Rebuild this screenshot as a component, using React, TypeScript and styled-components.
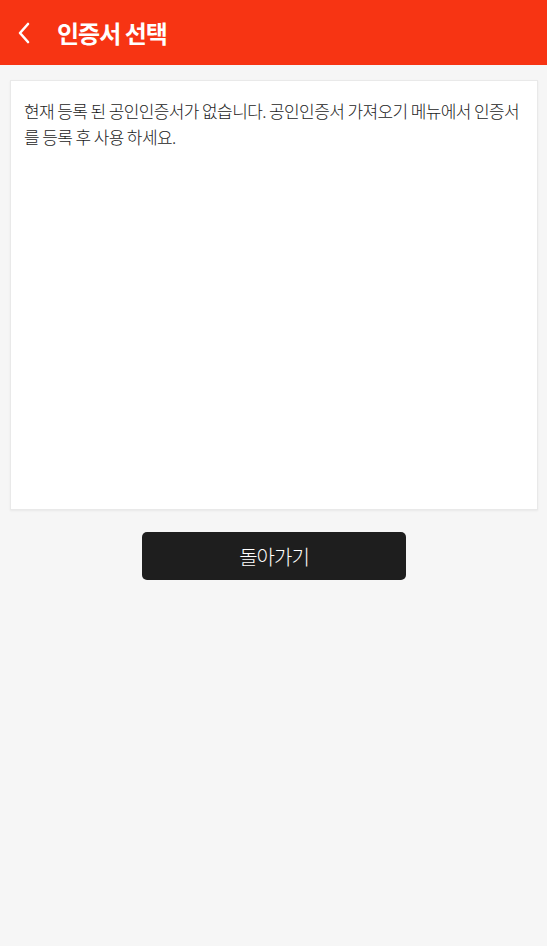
import React from "react";
import styled, { createGlobalStyle } from "styled-components";

const GlobalStyle = createGlobalStyle`
  html, body {
    margin: 0;
    padding: 0;
    background: #f6f6f6;
  }
  body {
    font-family: "Noto Sans CJK KR", "Noto Sans", sans-serif;
  }
`;

const Page = styled.div`
  min-height: 946px;
  background: #f6f6f6;
`;

const Header = styled.header`
  display: flex;
  align-items: center;
  height: 65px;
  background: #f73413;
  padding-left: 14px;
  box-sizing: border-box;
`;

const BackButton = styled.button`
  display: flex;
  align-items: center;
  justify-content: center;
  width: 20px;
  height: 30px;
  padding: 0;
  border: none;
  background: transparent;
  cursor: pointer;
`;

const Title = styled.h1`
  margin: 0 0 0 23px;
  font-size: 24px;
  font-weight: 700;
  color: #ffffff;
  letter-spacing: -1px;
`;

const Content = styled.main`
  display: flex;
  flex-direction: column;
  align-items: center;
  padding: 15px 9px 0 10px;
`;

const NoticeBox = styled.div`
  width: 100%;
  height: 430px;
  box-sizing: border-box;
  background: #ffffff;
  border: 1px solid #e9e9e9;
  box-shadow: 0 1px 2px rgba(0, 0, 0, 0.06);
  padding: 17px 13px;
`;

const NoticeText = styled.p`
  margin: 0;
  font-size: 17px;
  line-height: 26px;
  color: #1c1c1c;
  font-weight: 300;
  letter-spacing: -0.6px;
  word-break: break-all;
`;

const ReturnButton = styled.button`
  margin-top: 22px;
  width: 264px;
  height: 48px;
  border: none;
  border-radius: 5px;
  background: #1e1e1e;
  color: #ffffff;
  font-family: "Noto Sans CJK KR", "Noto Sans", sans-serif;
  font-size: 20px;
  font-weight: 300;
  letter-spacing: -1px;
  cursor: pointer;
`;

const ChevronLeft = () => (
  <svg width="16" height="24" viewBox="0 0 16 24" fill="none">
    <path d="M12 3 L4 12 L12 21" stroke="#ffffff" strokeWidth="2.6" strokeLinecap="round" strokeLinejoin="round" />
  </svg>
);

export default function App() {
  return (
    <Page>
      <GlobalStyle />
      <Header>
        <BackButton aria-label="뒤로">
          <ChevronLeft />
        </BackButton>
        <Title>인증서 선택</Title>
      </Header>
      <Content>
        <NoticeBox>
          <NoticeText>
            현재 등록 된 공인인증서가 없습니다. 공인인증서 가져오기 메뉴에서 인증서를 등록 후 사용 하세요.
          </NoticeText>
        </NoticeBox>
        <ReturnButton>돌아가기</ReturnButton>
      </Content>
    </Page>
  );
}
